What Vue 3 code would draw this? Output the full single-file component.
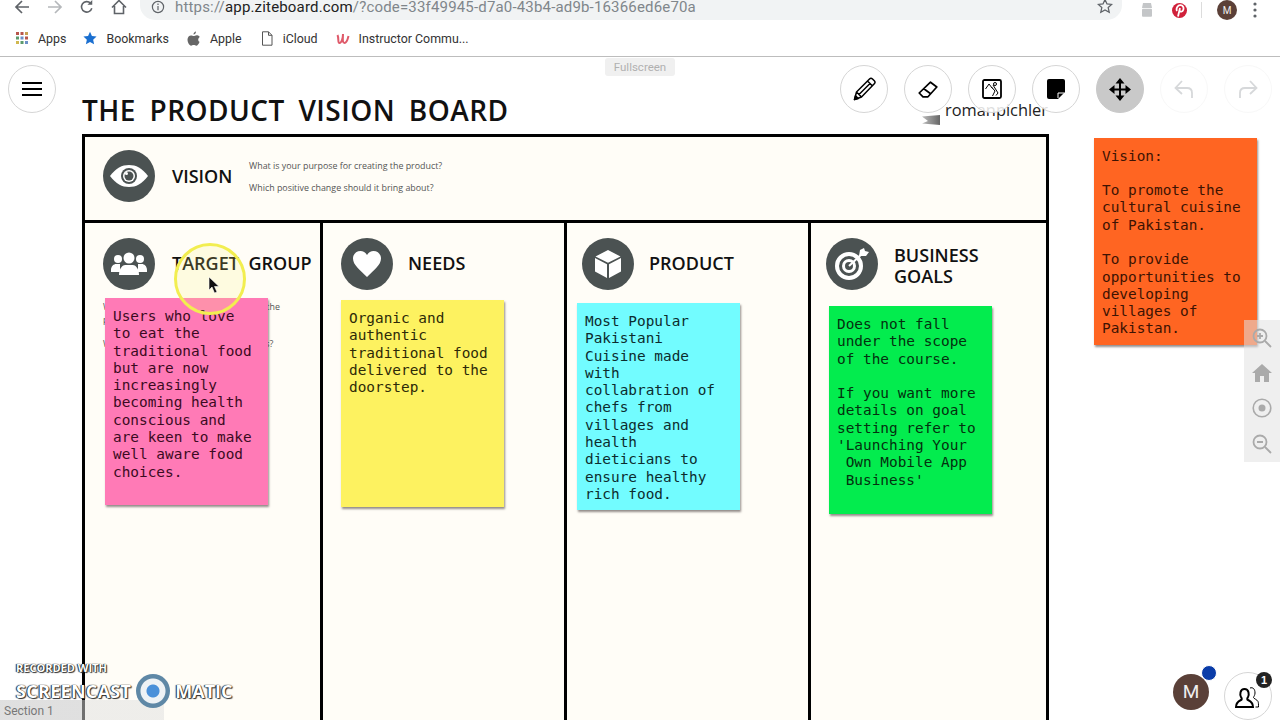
<script setup>
const bookmarks = [
  { name: 'Apps', icon: 'apps' },
  { name: 'Bookmarks', icon: 'star' },
  { name: 'Apple', icon: 'apple' },
  { name: 'iCloud', icon: 'doc' },
  { name: 'Instructor Commu...', icon: 'udemy' }
]

const notes = [
  { id: 'pink', text: 'Users who love to eat the traditional food but are now increasingly becoming health conscious and are keen to make well aware food choices.' },
  { id: 'yellow', text: 'Organic and authentic traditional food delivered to the doorstep.' },
  { id: 'cyan', text: 'Most Popular Pakistani Cuisine made with collabration of chefs from villages and health dieticians to ensure healthy rich food.' },
  { id: 'green', text: "Does not fall under the scope of the course.\n\nIf you want more details on goal setting refer to 'Launching Your\n Own Mobile App\n Business'" },
  { id: 'orange', text: 'Vision:\n\nTo promote the cultural cuisine of Pakistan.\n\nTo provide opportunities to developing villages of Pakistan.' }
]
</script>

<template>
  <div class="page">
    <!-- Browser chrome -->
    <header class="chrome">
      <div class="toolbar">
        <div class="nav">
          <svg width="16" height="16" viewBox="0 0 16 16" fill="none" stroke="#5f6368" stroke-width="1.7"><path d="M15 8H2M8 2 2 8l6 6" /></svg>
          <svg width="16" height="16" viewBox="0 0 16 16" fill="none" stroke="#b5b8bb" stroke-width="1.7"><path d="M1 8h13M8 2l6 6-6 6" /></svg>
          <svg width="14" height="16" viewBox="0 0 16 16" fill="none" stroke="#5f6368" stroke-width="1.8"><path d="M13.5 9.5A6 6 0 1 1 12 3.6" /><path d="M14 0v5.500H8.500" fill="#5f6368" stroke="none" /></svg>
          <svg width="16" height="16" viewBox="0 0 16 16" fill="none" stroke="#5f6368" stroke-width="1.6"><path d="M1 8.500 8 1.500l7 7M3.500 7v7.500h9V7" /></svg>
        </div>
        <div class="omnibox">
          <svg width="14" height="14" viewBox="0 0 14 14" fill="none" stroke="#5f6368" stroke-width="1.200"><circle cx="7" cy="7" r="5.600" /><path d="M7 6v4.200M7 3.600v1.300" /></svg>
          <span class="url"><span class="dim">https://</span>app.ziteboard.com<span class="dim">/?code=33f49945-d7a0-43b4-ad9b-16366ed6e70a</span></span>
          <svg width="16" height="16" viewBox="0 0 16 16" fill="none" stroke="#5f6368" stroke-width="1.300"><path d="m8 1.600 2 4.300 4.700.5-3.500 3.200 1 4.700L8 12l-4.200 2.300 1-4.700L1.300 6.400 6 5.900z" /></svg>
        </div>
        <div class="extensions">
          <svg width="14" height="16" viewBox="0 0 14 16" fill="#c4c6c8"><path d="M3 1h8l1 5H2z" /><rect x="2" y="6.800" width="10" height="8" rx="1" /></svg>
          <span class="pinterest">
            <svg width="10" height="13" viewBox="0 0 10 13" fill="none" stroke="#fff" stroke-width="1.800"><path d="M2 7C.6 4 3 1 5.500 1.200 8 1.400 9 3.500 8.300 5.700 7.600 8 5 8.200 4.500 6.500M5 4 3 12.500" /></svg>
          </span>
          <i class="sep"></i>
          <span class="profile">M</span>
          <svg width="4" height="16" viewBox="0 0 4 16" fill="#5f6368"><circle cx="2" cy="2" r="1.600" /><circle cx="2" cy="8" r="1.600" /><circle cx="2" cy="14" r="1.600" /></svg>
        </div>
      </div>
      <nav class="bookmarks">
        <span v-for="b in bookmarks" :key="b.name" class="bookmark" :class="b.icon">
          <svg v-if="b.icon === 'apps'" width="14" height="14" viewBox="0 0 14 14">
            <rect x="1" y="1" width="3" height="3" fill="#b8564c" />
            <rect x="5.500" y="1" width="3" height="3" fill="#b8564c" />
            <rect x="10" y="1" width="3" height="3" fill="#c8a050" />
            <rect x="1" y="5.500" width="3" height="3" fill="#5c9a6c" />
            <rect x="5.500" y="5.500" width="3" height="3" fill="#6c90c8" />
            <rect x="10" y="5.500" width="3" height="3" fill="#b8564c" />
            <rect x="1" y="10" width="3" height="3" fill="#d0b850" />
            <rect x="5.500" y="10" width="3" height="3" fill="#5c9a6c" />
            <rect x="10" y="10" width="3" height="3" fill="#6c90c8" />
          </svg>
          <svg v-else-if="b.icon === 'star'" width="14" height="14" viewBox="0 0 16 16" fill="#1a6fd0"><path d="m8 .8 2.200 4.900 5.300.6-3.900 3.600 1.100 5.300L8 12.500l-4.700 2.700 1.100-5.300L.5 6.300l5.300-.6z" /></svg>
          <svg v-else-if="b.icon === 'apple'" width="13" height="15" viewBox="0 0 13 15" fill="#666"><path d="M9 .5C9 2.200 7.800 3.500 6.500 3.500 6.400 2 7.700.7 9 .5zM12.500 11c-.8 2-2 3.700-3.200 3.700-1 0-1.400-.6-2.600-.6s-1.700.6-2.600.6C2.500 14.700.5 11.500.5 8.600c0-2.700 1.800-4.200 3.500-4.200 1.100 0 2 .7 2.700.7s1.700-.8 3-.8c.6 0 2.200.2 3.100 1.700-2.400 1.500-2 4.800.7 5z" /></svg>
          <svg v-else-if="b.icon === 'doc'" width="12" height="15" viewBox="0 0 12 15" fill="none" stroke="#555" stroke-width="1"><path d="M1.500.8h6l3.500 3.500v9.900h-9.500zM7.500.8v3.500H11" /></svg>
          <svg v-else width="14" height="13" viewBox="0 0 14 13" fill="none" stroke="#df5a6a" stroke-width="2"><path d="M1.500 3C3 6 1.500 11 3.500 11S7 6 7 2c0 4-1 9 1.500 9S12 6 12.500 4" /></svg>
          <span>{{ b.name }}</span>
        </span>
      </nav>
    </header>

    <!-- Whiteboard -->
    <main class="canvas">
      <h1 class="title">THE PRODUCT VISION BOARD</h1>

      <div class="brand">
        <svg width="19" height="10" viewBox="0 0 19 10"><defs><linearGradient id="brandFill" x1="0" x2="1"><stop offset="0" stop-color="#bbb" /><stop offset="1" stop-color="#666" /></linearGradient></defs><path d="M0 1.500 18 0v10L0 8.500 6 6z" fill="url(#brandFill)" /></svg>
        <span>romanpichler</span>
      </div>

      <section class="board">
        <div class="vision">
          <span class="disc">
            <svg width="40" height="24" viewBox="0 0 40 24"><path d="M1 12C7 4 13 1 20 1s13 3 19 11c-6 8-12 11-19 11S7 20 1 12z" fill="#fff" /><circle cx="20" cy="12" r="8" fill="#4b5252" /><circle cx="20" cy="12" r="6" fill="#fff" /><circle cx="20" cy="12" r="4.500" fill="#4b5252" /><circle cx="17.500" cy="9.500" r="1.500" fill="#fff" /></svg>
          </span>
          <h2>VISION</h2>
          <div class="hint">
            <p>What is your purpose for creating the product?</p>
            <p>Which positive change should it bring about?</p>
          </div>
        </div>

        <div class="columns">
          <div class="col col-target">
            <div class="col-head">
              <span class="disc">
                <svg width="36" height="24" viewBox="0 0 36 24" fill="#fff"><circle cx="7" cy="7" r="4" /><circle cx="29" cy="7" r="4" /><path d="M0 18c0-4 3-6 5-6h4v8H0zM36 18c0-4-3-6-5-6h-4v8h9z" /><circle cx="18" cy="6" r="5.500" /><path d="M8 23c0-7 4-10 6-10h8c2 0 6 3 6 10z" /></svg>
              </span>
              <h2>TARGET GROUP</h2>
            </div>
            <div class="hint under">
              <p>Which market or market segment does the</p>
              <p>product address?</p>
              <p>Who are the target customers and users?</p>
            </div>
          </div>

          <div class="col col-needs">
            <div class="col-head">
              <span class="disc">
                <svg width="30" height="28" viewBox="0 0 30 28" fill="#fff"><path d="M15 27C8 20 1 15 1 8.500 1 4 4.500 1 8.500 1 11 1 13.500 2.300 15 5c1.500-2.700 4-4 6.500-4C25.500 1 29 4 29 8.500 29 15 22 20 15 27z" /></svg>
              </span>
              <h2>NEEDS</h2>
            </div>
          </div>

          <div class="col col-product">
            <div class="col-head">
              <span class="disc">
                <svg width="28" height="30" viewBox="0 0 28 30" fill="#fff"><path d="M14 1 26.500 7.500 14 13.800 1.500 7.500zM1 9l12 6.200V29L1 22.500zM27 9l-12 6.200V29l12-6.500z" /></svg>
              </span>
              <h2>PRODUCT</h2>
            </div>
          </div>

          <div class="col col-goals">
            <div class="col-head">
              <span class="disc">
                <svg width="36" height="34" viewBox="0 0 36 34" fill="none" stroke="#fff"><circle cx="15" cy="19" r="12" stroke-width="4" /><circle cx="15" cy="19" r="5.500" stroke-width="3" /><path d="m15 19 15-14" stroke-width="2" /><path d="m25 9 1-6 4-2 1 3 4 1-3 4z" fill="#fff" stroke="none" /></svg>
              </span>
              <h2>BUSINESS<br />GOALS</h2>
            </div>
          </div>
        </div>
      </section>

      <!-- Sticky notes sit freely on the board -->
      <div v-for="n in notes" :key="n.id" class="note" :class="n.id">{{ n.text }}</div>

      <!-- Recorder's click highlight and pointer -->
      <span class="click-ring"></span>
      <svg class="pointer" width="12" height="18" viewBox="0 0 12 18"><path d="M1 1v13l3-3 2.500 6 2.500-1-2.500-5.500H11z" fill="#111" stroke="#fff" stroke-width=".6" /></svg>

      <!-- Ziteboard controls -->
      <button class="round menu">
        <svg width="22" height="16" viewBox="0 0 22 16" stroke="#000" stroke-width="2.200"><path d="M1 2h20M1 8h20M1 14h20" /></svg>
      </button>
      <div class="fullscreen">Fullscreen</div>

      <div class="tools">
        <button class="round">
          <svg width="23" height="24" viewBox="0 0 23 24" fill="none" stroke="#000" stroke-width="1.500" stroke-linejoin="round"><path d="M1.500 22.500 3.500 15 16.500 2c1-1 2-1 3 0l1.800 1.800c1 1 1 2 0 3L8.500 20zM3.500 15l5 5M14.500 4l5 5M6 17.500 17 6.500" /><path d="m1.500 22.500 1-3.800 2.800 2.800z" fill="#000" /></svg>
        </button>
        <button class="round">
          <svg width="20" height="17" viewBox="0 0 20 17" fill="none" stroke="#000" stroke-width="1.700" stroke-linejoin="round"><path d="M12.500 1.200 18.800 6 10 15.800H5L1.200 12zM5.500 7.500l6.800 5" /></svg>
        </button>
        <button class="round">
          <svg width="20" height="20" viewBox="0 0 20 20" fill="none" stroke="#000" stroke-width="1"><rect x="1" y="1" width="18" height="18" rx="1.500" stroke-width="1.800" /><path d="m3.500 10 3.500-5 3.500 4.500M9.500 8l3.500 4-2.500 5M11 6l5 8-2 2.500" /><circle cx="13" cy="5" r="1.500" /></svg>
        </button>
        <button class="round">
          <svg width="18" height="20" viewBox="0 0 18 20"><path d="M2 0h14a2 2 0 0 1 2 2v11l-7 7H2a2 2 0 0 1-2-2V2a2 2 0 0 1 2-2z" fill="#000" /><path d="M11 19v-5h6" fill="none" stroke="#fff" stroke-width="1" /></svg>
        </button>
        <button class="round active">
          <svg width="22" height="23" viewBox="0 0 22 23" fill="none" stroke="#000" stroke-width="2"><path d="M11 3v17M3 11.500h16" /><path d="m11 0 4.500 5.500h-9zM11 23l4.500-5.500h-9zM0 11.500 5.500 7v9zM22 11.500 16.500 7v9z" fill="#000" stroke="none" /></svg>
        </button>
        <button class="round ghost">
          <svg width="22" height="20" viewBox="0 0 22 20" fill="none" stroke="#d6d8da" stroke-width="1.800"><path d="M19 19v-5c0-3-2-5-5-5H3M9 2 2.500 9 9 15" /></svg>
        </button>
        <button class="round ghost">
          <svg width="22" height="20" viewBox="0 0 22 20" fill="none" stroke="#d6d8da" stroke-width="1.800"><path d="M3 19v-5c0-3 2-5 5-5h11M13 2l6.500 7L13 15" /></svg>
        </button>
      </div>

      <div class="zoom-panel">
        <svg width="20" height="20" viewBox="0 0 20 20" fill="none" stroke="#aaa" stroke-width="1.800"><circle cx="8" cy="8" r="6.500" /><path d="m13 13 6 6M5 8h6M8 5v6" /></svg>
        <svg width="20" height="18" viewBox="0 0 20 18" fill="#aaa"><path d="M10 0 0 9h3v9h5v-6h4v6h5V9h3z" /></svg>
        <svg width="20" height="20" viewBox="0 0 20 20"><circle cx="10" cy="10" r="8.800" fill="none" stroke="#aaa" stroke-width="1.600" /><circle cx="10" cy="10" r="3.500" fill="#aaa" /></svg>
        <svg width="20" height="20" viewBox="0 0 20 20" fill="none" stroke="#aaa" stroke-width="1.800"><circle cx="8" cy="8" r="6.500" /><path d="m13 13 6 6M5 8h6" /></svg>
      </div>

      <div class="user">M<i></i></div>
      <button class="round people">
        <svg width="26" height="26" viewBox="0 0 26 26" fill="none" stroke="#000" stroke-width="2"><path d="M1 24c0-5 3-6 5-7 1-.5 1-1.500 0-3-1.200-2-1.200-8 3.500-8S14.200 12 13 14c-1 1.500-1 2.500 0 3 2 1 5 2 5 7z" /><path d="M15 5c3-1 5 1 5 5 0 2-1 3-1.500 4.500 0 1 3.500 2 4.500 4 .5 1 .5 3 .5 5.500h-3" stroke-width="1" /></svg>
        <b>1</b>
      </button>

      <div class="section-tab">Section 1</div>
      <div class="watermark">
        <span class="wm-small">RECORDED WITH</span>
        <div class="wm-row">
          <span class="wm-name">SCREENCAST</span>
          <i class="wm-ring"></i>
          <span>MATIC</span>
        </div>
      </div>
    </main>
  </div>
</template>

<style>
html, body { margin: 0; background: #fff; }
</style>

<style scoped>
.page {
  width: 1280px;
  height: 720px;
  overflow: hidden;
  display: flex;
  flex-direction: column;
  font-family: Roboto, "Liberation Sans", sans-serif;
}

.chrome {
  height: 57px;
  flex: none;
  box-sizing: border-box;
  border-bottom: 1px solid #bdbdbd;
}

.toolbar {
  height: 20px;
  display: flex;
  align-items: flex-end;
  padding-left: 14px;
}
.nav {
  display: flex;
  gap: 17px;
  width: 126px;
  height: 20px;
  align-items: flex-start;
  margin-top: -2px;
}
.nav svg { margin-top: -1px; }

.omnibox {
  width: 982px;
  height: 30px;
  padding: 0 9px 6px 11px;
  box-sizing: border-box;
  background: #f1f3f4;
  border-radius: 0 0 15px 15px;
  display: flex;
  align-items: flex-end;
  gap: 10px;
}
.url {
  flex: 1;
  font-size: 15px;
  line-height: 16px;
  letter-spacing: .17px;
  color: #222;
  margin-bottom: -1px;
}
.dim { color: #80868b; }

.extensions {
  display: flex;
  align-items: center;
  height: 20px;
  margin-top: -8px;
  padding-left: 18px;
}
.pinterest {
  width: 15px;
  height: 15px;
  border-radius: 50%;
  background: #d0213a;
  margin-left: 18px;
  display: flex;
  align-items: center;
  justify-content: center;
}
.sep { width: 1px; height: 16px; background: #dcdcdc; margin: 0 15px 0 14px; }
.profile {
  width: 20px;
  height: 20px;
  border-radius: 50%;
  background: #5b4038;
  color: #eee;
  font-size: 10px;
  display: flex;
  align-items: center;
  justify-content: center;
  margin-right: 16px;
}

.bookmarks {
  height: 36px;
  display: flex;
  align-items: center;
  padding-left: 15px;
  color: #333;
  font-size: 12.4px;
}
.bookmark { display: flex; align-items: center; gap: 9px; margin-right: 18px; white-space: nowrap; }
.bookmark.apps { margin-right: 17px; }
.bookmark.apple { gap: 10px; margin-right: 19px; }
.bookmark.doc { gap: 10px; }

.canvas {
  position: relative;
  flex: 1;
  overflow: hidden;
  padding-left: 82px;
}

.title {
  margin: 0;
  height: 77px;
  padding-top: 35px;
  box-sizing: border-box;
  font-family: "Open Sans", sans-serif;
  font-size: 28px;
  line-height: 36px;
  font-weight: 600;
  letter-spacing: .45px;
  word-spacing: 6px;
  color: #111;
}

.brand {
  position: absolute;
  left: 922px;
  top: 43px;
  display: flex;
  align-items: flex-end;
  gap: 4px;
  font-family: "Open Sans", sans-serif;
  font-size: 16.4px;
  color: #222;
  line-height: 20px;
}
.brand svg { margin-bottom: -5px; }

.board {
  width: 967px;
  height: 600px;
  box-sizing: border-box;
  border: solid #000;
  border-width: 3px 3px 0;
  background: #fffdf7;
}

.vision {
  height: 78px;
  padding: 0 0 5px 18px;
  border-bottom: 3px solid #000;
  display: flex;
  align-items: center;
}
.vision h2 { width: 77px; margin-left: 17px; }

h2 {
  margin: 0;
  font-family: "Open Sans", sans-serif;
  font-size: 18px;
  line-height: 21px;
  font-weight: 600;
  color: #111;
}

.disc {
  width: 52px;
  height: 52px;
  flex: none;
  border-radius: 50%;
  background: #4b5252;
  display: flex;
  align-items: center;
  justify-content: center;
}

.hint p {
  margin: 0;
  font-family: "Open Sans", sans-serif;
  font-size: 8.9px;
  line-height: 13px;
  color: #555;
  white-space: nowrap;
}
.vision .hint p + p { margin-top: 9px; }
.hint.under { margin: 10px 0 0 18px; }
.hint.under p:nth-child(2) { margin-bottom: 11px; }

.columns {
  height: 100%;
  display: grid;
  grid-template-columns: 238px 244px 244px 1fr;
}
.col { border-right: 3px solid #000; }
.col:last-child { border-right: 0; }
.col-head {
  display: flex;
  align-items: center;
  gap: 15px;
  padding: 15px 0 0 18px;
}
.col-head h2 { margin-bottom: 2px; }
.col-target .col-head { gap: 17px; }
.col-target h2 { word-spacing: 5px; white-space: nowrap; }
.col-product .col-head { padding-left: 15px; }
.col-goals .col-head { padding-left: 15px; gap: 16px; }
.col-goals h2 { margin: 4px 0 0; }

.note {
  position: absolute;
  width: 163px;
  height: 207px;
  box-sizing: border-box;
  padding: 10px 9px 0 8px;
  font-family: "DejaVu Sans Mono", "Liberation Mono", monospace;
  font-size: 14.4px;
  line-height: 17.3px;
  white-space: pre-wrap;
  box-shadow: 1px 2px 2px rgba(60, 50, 50, .55);
}
.pink { left: 105px; top: 241px; background: #ff7ab6; color: #3b0a22; }
.yellow { left: 341px; top: 243px; background: #fdf260; color: #2d2a08; }
.cyan { left: 577px; top: 246px; background: #72fcff; color: #0c2c2e; }
.green { left: 829px; top: 249px; height: 208px; background: #03ec4e; color: #04300f; }
.orange { left: 1094px; top: 81px; padding-top: 9.500px; background: #ff6522; color: #3d1303; }

.click-ring {
  position: absolute;
  left: 174px;
  top: 186px;
  width: 72px;
  height: 72px;
  box-sizing: border-box;
  border-radius: 50%;
  border: 3px solid #f2ee50;
  background: rgba(250, 245, 120, .18);
}
.pointer { position: absolute; left: 208px; top: 219px; }

.round {
  width: 48px;
  height: 48px;
  padding: 0;
  box-sizing: border-box;
  border: 1px solid #d6d6d6;
  border-radius: 50%;
  background: rgba(255, 255, 255, .85);
  display: flex;
  align-items: center;
  justify-content: center;
}
.menu { position: absolute; left: 8px; top: 8px; background: #fff; }

.fullscreen {
  position: absolute;
  left: 605px;
  top: 1px;
  width: 70px;
  height: 18px;
  border-radius: 3px;
  background: #f0f0f0;
  color: #b0b0b0;
  font-size: 11.500px;
  line-height: 18px;
  text-align: center;
}

.tools {
  position: absolute;
  left: 840px;
  top: 8px;
  display: flex;
  gap: 16px;
}
.active { background: #c9c9c9; border-color: #c9c9c9; }
.ghost { border-color: #f8f8f8; background: transparent; }

.zoom-panel {
  position: absolute;
  right: 0;
  top: 263px;
  width: 36px;
  height: 142px;
  background: rgba(225, 225, 225, .55);
  display: flex;
  flex-direction: column;
  align-items: center;
  justify-content: space-around;
}

.user {
  position: absolute;
  left: 1173px;
  top: 617px;
  width: 36px;
  height: 36px;
  border-radius: 50%;
  background: #5a4038;
  color: #eee;
  font-size: 19px;
  line-height: 36px;
  text-align: center;
}
.user i {
  position: absolute;
  left: 28px;
  top: -9px;
  width: 14px;
  height: 14px;
  border-radius: 50%;
  background: #0a3ca8;
  border: 1px solid #fff;
}

.people { position: absolute; left: 1224px; top: 615px; background: #fff; }
.people b {
  position: absolute;
  right: -1px;
  top: -1px;
  width: 16px;
  height: 16px;
  border-radius: 50%;
  background: #222;
  color: #fff;
  font-size: 11px;
  line-height: 16px;
  text-align: center;
}

.section-tab {
  position: absolute;
  left: 0;
  bottom: 0;
  width: 164px;
  height: 20px;
  padding-left: 4px;
  box-sizing: border-box;
  background: linear-gradient(90deg, rgba(222, 222, 222, .95) 0 50%, rgba(222, 222, 222, .5) 50%);
  color: #777;
  font-size: 12px;
  line-height: 22px;
}

.watermark {
  position: absolute;
  left: 16px;
  top: 603px;
  font-family: "Open Sans", sans-serif;
  font-weight: 700;
  color: #fff;
  text-shadow: 0 0 1px #000, 1px 1px 1px #333, -1px 0 1px #333;
}
.wm-small { display: block; font-size: 11px; line-height: 15px; }
.wm-row { display: flex; align-items: center; gap: 5px; font-size: 18px; line-height: 34px; margin-top: -1px; }
.wm-name { letter-spacing: .3px; }
.wm-ring {
  width: 34px;
  height: 34px;
  box-sizing: border-box;
  border-radius: 50%;
  background: radial-gradient(circle, #4a90d9 0 6px, #eef2f5 7px 12px, #5f88a6 13px);
}
</style>
